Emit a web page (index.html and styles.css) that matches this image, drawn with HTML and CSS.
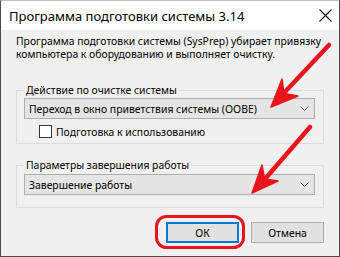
FILE: index.html
```html
<!DOCTYPE html>
<html lang="ru">
<head>
    <meta charset="UTF-8">
    <title>Программа подготовки системы 3.14</title>
    <link rel="stylesheet" href="styles.css">
</head>
<body>
    <div class="window">
        <div class="titlebar">
            <span class="title">Программа подготовки системы 3.14</span>
            <svg class="close" width="13" height="13" viewBox="0 0 13 13">
                <path d="M0.5 0.5 L12.5 12.5 M12.5 0.5 L0.5 12.5" stroke="#111" stroke-width="1.1" fill="none"/>
            </svg>
        </div>
        <div class="content">
            <p class="intro">Программа подготовки системы (SysPrep) убирает привязку<br>компьютера к оборудованию и выполняет очистку.</p>

            <fieldset class="group group-action">
                <legend>Действие по очистке системы</legend>
                <div class="combo">
                    <span>Переход в окно приветствия системы (OOBE)</span>
                    <svg class="chevron" width="9" height="5" viewBox="0 0 9 5"><path d="M0.5 0.5 L4.5 4.5 L8.5 0.5" stroke="#555" fill="none"/></svg>
                </div>
                <label class="check-row">
                    <span class="checkbox"></span>
                    <span>Подготовка к использованию</span>
                </label>
            </fieldset>

            <fieldset class="group group-shutdown">
                <legend>Параметры завершения работы</legend>
                <div class="combo">
                    <span>Завершение работы</span>
                    <svg class="chevron" width="9" height="5" viewBox="0 0 9 5"><path d="M0.5 0.5 L4.5 4.5 L8.5 0.5" stroke="#555" fill="none"/></svg>
                </div>
            </fieldset>

            <div class="buttons">
                <button class="btn btn-default">ОК</button>
                <button class="btn">Отмена</button>
            </div>
        </div>

        <!-- red annotation marks drawn over the dialog -->
        <svg class="marks" width="340" height="257" viewBox="0 0 340 257">
            <g fill="#e8151d" stroke="#e8151d" stroke-linecap="round" stroke-linejoin="round">
                <line x1="329" y1="45" x2="284" y2="93" stroke-width="4.5"/>
                <polygon points="271,107 298,96 284,93.5 282,79" stroke-width="1.5"/>
                <line x1="310" y1="127" x2="265" y2="179" stroke-width="4.5"/>
                <polygon points="252,193 278,181 264.5,179 262,165" stroke-width="1.5"/>
            </g>
            <rect x="156.5" y="216.5" width="87" height="31" rx="10" ry="10" fill="none" stroke="#e8151d" stroke-width="3"/>
        </svg>
    </div>
</body>
</html>
```

FILE: styles.css
```css
body {
    margin: 0;
    font-family: 'Noto Sans', 'Open Sans', sans-serif;
    color: #000;
}
.window {
    position: relative;
    width: 340px;
    height: 257px;
    box-sizing: border-box;
    border: 1px solid #4a4a4a;
    border-top-color: #bcbcbc;
    display: flex;
    flex-direction: column;
    background: #f0f0f0;
}
.titlebar {
    height: 29px;
    background: #fff;
    display: flex;
    align-items: center;
    justify-content: space-between;
    padding: 0 7px 0 8px;
}
.title {
    font-size: 13px;
    margin-top: 1px;
}
.close {
    margin-top: -1px;
}
.content {
    flex: 1;
    padding: 0 15px;
    font-size: 10.4px;
}
.intro {
    margin: 5px 0 0 0;
    line-height: 13px;
    white-space: nowrap;
}
.group {
    margin: 0;
    padding: 0 8px 5px 7px;
    border: 1px solid #dcdcdc;
    min-width: 0;
}
.group legend {
    padding: 0 2px;
    line-height: 14px;
}
.group-action {
    margin-top: 22px;
}
.group-shutdown {
    margin-top: 14px;
    padding-bottom: 12px;
}
.combo {
    height: 21px;
    box-sizing: border-box;
    border: 1px solid #adadad;
    background: #e5e5e5;
    display: flex;
    align-items: center;
    justify-content: space-between;
    padding: 0 5px 0 4px;
    margin-top: 1px;
}
.group-shutdown .combo {
    margin-top: 2px;
}
.check-row {
    display: flex;
    align-items: center;
    gap: 4px;
    margin: 6px 0 0 15px;
    height: 13px;
}
.checkbox {
    width: 11px;
    height: 11px;
    border: 1px solid #333;
    background: #fff;
}
.buttons {
    display: flex;
    justify-content: flex-end;
    gap: 12px;
    margin-top: 14px;
}
.btn {
    width: 73px;
    height: 21px;
    font-family: inherit;
    font-size: 10.4px;
    color: #000;
    background: #e1e1e1;
    border: 1px solid #adadad;
    padding: 0;
}
.btn-default {
    border: 2px solid #0078d7;
}
.marks {
    position: absolute;
    top: -1px;
    left: -1px;
    pointer-events: none;
}
```
